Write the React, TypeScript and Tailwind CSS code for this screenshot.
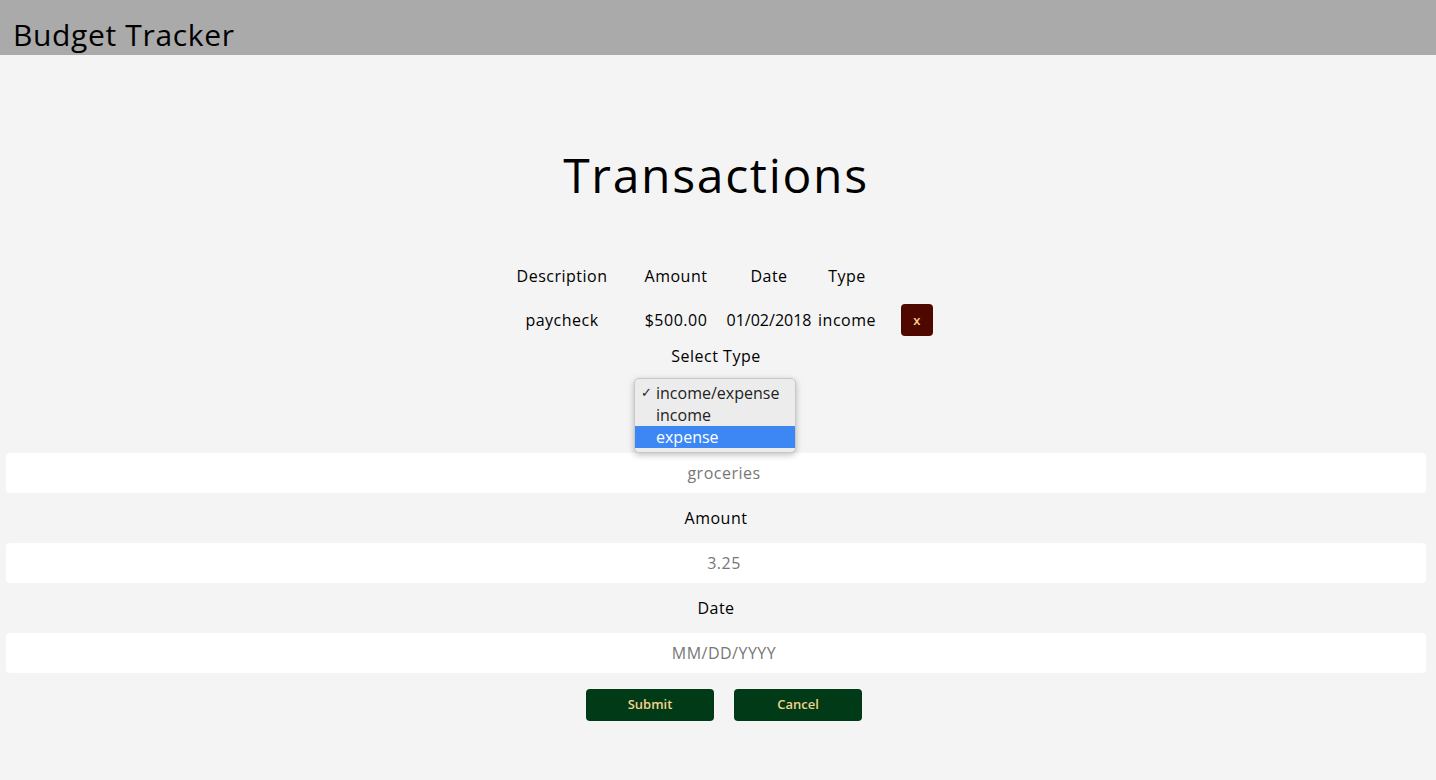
import React from "react";

const font = { fontFamily: '"Open Sans", "Liberation Sans", sans-serif' };

export default function App() {
  return (
    <div className="min-h-[780px] bg-[#f4f4f4] text-black" style={font}>
      <header className="h-[55px] bg-[#aaaaaa] flex items-end pl-[13px] pb-[2px]">
        <h1 className="text-[30px] leading-[36px] tracking-[0.65px]">Budget Tracker</h1>
      </header>

      <main className="pr-[4px]">
        <h2 className="mt-[91px] h-[58px] text-center text-[48px] leading-[58px] tracking-[1.7px]">Transactions</h2>

        <div className="mt-[54px] flex justify-center pl-[18px]">
          <div className="grid grid-cols-[110px_118px_68px_88px_52px] text-[16px] tracking-[0.5px]">
            <div className="h-[36px] flex items-center justify-center whitespace-nowrap">Description</div>
            <div className="h-[36px] flex items-center justify-center whitespace-nowrap">Amount</div>
            <div className="h-[36px] flex items-center justify-center whitespace-nowrap">Date</div>
            <div className="h-[36px] flex items-center justify-center whitespace-nowrap">Type</div>
            <div className="h-[36px]"></div>
            <div className="mt-[6px] h-[40px] flex items-center justify-center whitespace-nowrap">paycheck</div>
            <div className="mt-[6px] h-[40px] flex items-center justify-center whitespace-nowrap">$500.00</div>
            <div className="mt-[6px] h-[40px] flex items-center justify-center whitespace-nowrap tracking-[0px]">01/02/2018</div>
            <div className="mt-[6px] h-[40px] flex items-center justify-center whitespace-nowrap">income</div>
            <div className="mt-[6px] h-[40px] flex items-center justify-center">
              <button className="w-[32px] h-[32px] rounded-[4px] bg-[#4e0800] text-[#f3d28b] text-[13px] font-semibold leading-none" style={font}>x</button>
            </div>
          </div>
        </div>

        <div className="h-[32px] flex items-center justify-center text-[16px] tracking-[0.5px]">Select Type</div>

        <div className="relative mt-[6px] h-[75px]">
          <div className="absolute left-[calc(50%-82px)] top-0 w-[162px] h-[75px] rounded-[5px] bg-[#ececec] border border-[#c8c8c8] shadow-[0_2px_6px_rgba(0,0,0,0.25)] pt-[3px] text-[16px] text-[#222]">
            <div className="h-[22px] flex items-center">
              <span className="w-[21px] pl-[6px] text-[13px]">✓</span>
              <span>income/expense</span>
            </div>
            <div className="h-[22px] flex items-center pl-[21px]">income</div>
            <div className="h-[22px] flex items-center pl-[21px] bg-[#3d87f5] text-white">expense</div>
          </div>
        </div>

        <input
          placeholder="groceries"
          className="block mx-[6px] w-[calc(100%-12px)] h-[40px] rounded-[4px] bg-white text-center pl-[16px] text-[16px] tracking-[0.5px] placeholder:text-[#777] outline-none"
          style={font}
        />
        <div className="h-[50px] flex items-center justify-center text-[16px] tracking-[0.5px]">Amount</div>
        <input
          placeholder="3.25"
          className="block mx-[6px] w-[calc(100%-12px)] h-[40px] rounded-[4px] bg-white text-center pl-[16px] text-[16px] tracking-[0.5px] placeholder:text-[#777] outline-none"
          style={font}
        />
        <div className="h-[50px] flex items-center justify-center text-[16px] tracking-[0.5px]">Date</div>
        <input
          placeholder="MM/DD/YYYY"
          className="block mx-[6px] w-[calc(100%-12px)] h-[40px] rounded-[4px] bg-white text-center pl-[16px] text-[16px] tracking-[0.5px] placeholder:text-[#777] outline-none"
          style={font}
        />

        <div className="mt-[16px] flex justify-center gap-[20px] pl-[16px]">
          <button className="w-[128px] h-[32px] rounded-[4px] bg-[#003a17] text-[#f3d28b] text-[13px] font-semibold" style={font}>Submit</button>
          <button className="w-[128px] h-[32px] rounded-[4px] bg-[#003a17] text-[#f3d28b] text-[13px] font-semibold" style={font}>Cancel</button>
        </div>
      </main>
    </div>
  );
}
